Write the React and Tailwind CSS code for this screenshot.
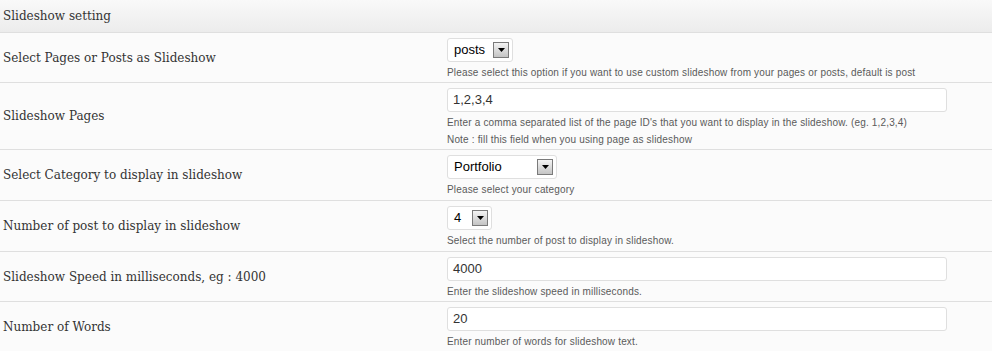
import React from "react";

const rows = [
  {
    label: "Select Pages or Posts as Slideshow",
    h: "h-[50px]",
    kind: "select",
    value: "posts",
    selW: "w-[66px]",
    notes: ["Please select this option if you want to use custom slideshow from your pages or posts, default is post"],
  },
  {
    label: "Slideshow Pages",
    h: "h-[67px]",
    kind: "text",
    value: "1,2,3,4",
    notes: [
      "Enter a comma separated list of the page ID's that you want to display in the slideshow. (eg. 1,2,3,4)",
      "Note : fill this field when you using page as slideshow",
    ],
  },
  {
    label: "Select Category to display in slideshow",
    h: "h-[51px]",
    kind: "select",
    value: "Portfolio",
    selW: "w-[110px]",
    notes: ["Please select your category"],
  },
  {
    label: "Number of post to display in slideshow",
    h: "h-[51px]",
    kind: "select",
    value: "4",
    selW: "w-[45px]",
    notes: ["Select the number of post to display in slideshow."],
  },
  {
    label: "Slideshow Speed in milliseconds, eg : 4000",
    h: "h-[50px]",
    kind: "text",
    value: "4000",
    notes: ["Enter the slideshow speed in milliseconds."],
  },
  {
    label: "Number of Words",
    h: "h-[50px]",
    kind: "text",
    value: "20",
    notes: ["Enter number of words for slideshow text."],
  },
];

const SelectBox = ({ value, w }) => (
  <div
    className={`${w} h-[24px] flex items-center justify-between bg-white border border-[#dfdfdf] rounded-[3px] pl-[6px] pr-[3px]`}
  >
    <span className="text-[13px] text-black">{value}</span>
    <div className="w-[16px] h-[16px] flex items-center justify-center border border-[#7a7a7a] bg-gradient-to-b from-[#f4f4f4] to-[#c4c4c4]">
      <svg width="7" height="4" viewBox="0 0 7 4">
        <path d="M0 0h7L3.5 4z" fill="#000" />
      </svg>
    </div>
  </div>
);

const TextBox = ({ value }) => (
  <div className="w-[500px] h-[24px] flex items-center bg-white border border-[#dfdfdf] rounded-[3px] px-[5px]">
    <span className="text-[13px] text-[#333]">{value}</span>
  </div>
);

export default function App() {
  return (
    <div className="w-[992px] h-[351px] overflow-hidden bg-[#f9f9f9] font-['Liberation_Sans',Arial,sans-serif]">
      <div className="h-[33px] flex items-center pl-[3px] border-b border-[#dfdfdf] bg-gradient-to-b from-[#f9f9f9] to-[#ececec]">
        <span className="font-['DejaVu_Serif',serif] text-[12px] text-[#333]">Slideshow setting</span>
      </div>
      {rows.map((r, i) => (
        <div
          key={i}
          className={`${r.h} flex border-b border-[#dfdfdf] bg-[#fbfbfb]`}
        >
          <div className="w-[447px] shrink-0 flex items-center pl-[3px]">
            <span className="font-['DejaVu_Serif',serif] text-[12px] text-[#333]">{r.label}</span>
          </div>
          <div className="flex flex-col pt-[5px]">
            {r.kind === "select" ? (
              <SelectBox value={r.value} w={r.selW} />
            ) : (
              <TextBox value={r.value} />
            )}
            <div className="mt-[3px] flex flex-col gap-[2px]">
              {r.notes.map((n, j) => (
                <span key={j} className="text-[10px] leading-[15px] tracking-[0.17px] text-[#5a5a5a]">
                  {n}
                </span>
              ))}
            </div>
          </div>
        </div>
      ))}
    </div>
  );
}
